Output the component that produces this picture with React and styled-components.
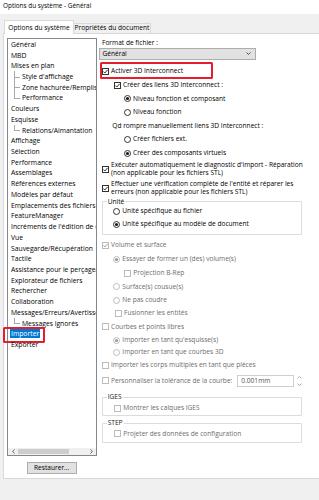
import React from 'react';
import styled, { createGlobalStyle } from 'styled-components';

const Global = createGlobalStyle`
  html, body {
    margin: 0;
    background: #f0f0f0;
    font-family: "Open Sans", "Noto Sans", sans-serif;
    font-size: 6.6px;
    color: #000;
    overflow: hidden;
  }
  #root {
    width: 319px;
    height: 500px;
  }
`;

// tree entries: [label, type]
const tree = [
  ['Général'], ['MBD'], ['Mises en plan'],
  ["Style d'affichage", 'child'], ['Zone hachurée/Remplissage', 'child'], ['Performance', 'last'],
  ['Couleurs'], ['Esquisse'], ['Relations/Aimantation', 'last'],
  ['Affichage'], ['Sélection'], ['Performance'], ['Assemblages'],
  ['Références externes'], ['Modèles par défaut'], ['Emplacements des fichiers'],
  ['FeatureManager'], ["Incréments de l'édition de cotes"], ['Vue'],
  ['Sauvegarde/Récupération'], ['Tactile'], ['Assistance pour le perçage/Toolbox'],
  ['Explorateur de fichiers'], ['Rechercher'], ['Collaboration'],
  ['Messages/Erreurs/Avertissements'], ['Messages ignorés', 'last'],
  ['Importer', 'selected'], ['Exporter'],
];

const Check = ({ on, off }) => (
  <Mark width="7" height="7" viewBox="0 0 7 7">
    <rect x="0.5" y="0.5" width="6" height="6" fill="#fff" stroke={off ? '#bcbcbc' : '#333'} />
    {on && <path d="M1.3 3.5 L2.8 5 L5.7 1.8" fill="none" stroke={off ? '#8f8f8f' : '#1a1a1a'} strokeWidth="0.9" />}
  </Mark>
);

const Radio = ({ on, off }) => (
  <Mark width="7" height="7" viewBox="0 0 7 7">
    <circle cx="3.5" cy="3.5" r="3" fill="#fff" stroke={off ? '#bcbcbc' : '#333'} />
    {on && <circle cx="3.5" cy="3.5" r="1.6" fill={off ? '#9a9a9a' : '#1a1a1a'} />}
  </Mark>
);

const Opt = ({ type, on, off, h, ind, mt, children }) => (
  <Row $h={h} $in={ind} $mt={mt} $off={off}>
    {type === 'check' && <Check on={on} off={off} />}
    {type === 'radio' && <Radio on={on} off={off} />}
    <Text>{children}</Text>
  </Row>
);

const App = () => {
  return (
    <>
      <Global />
      <TitleBar>Options du système - Général</TitleBar>
      <TabStrip>
        <Tab $active>Options du système</Tab>
        <Tab>Propriétés du document</Tab>
      </TabStrip>

      <TabPage>
        <LeftCol>
          <Tree>
            <TreeList>
              {tree.map(([label, type], i) => (
                <TreeRow key={i} $child={type === 'child' || type === 'last'} $last={type === 'last'}>
                  <TreeText $sel={type === 'selected'}>
                    <span>{label}</span>
                  </TreeText>
                  {type === 'selected' && <Annotation />}
                </TreeRow>
              ))}
            </TreeList>
            <HScroll>
              <ScrollBtn>
                <svg width="3" height="5" viewBox="0 0 3 5"><path d="M2.5 0.5 L0.7 2.5 L2.5 4.5" fill="none" stroke="#555" strokeWidth="0.9" /></svg>
              </ScrollBtn>
              <Thumb />
              <ScrollBtn>
                <svg width="3" height="5" viewBox="0 0 3 5"><path d="M0.5 0.5 L2.3 2.5 L0.5 4.5" fill="none" stroke="#555" strokeWidth="0.9" /></svg>
              </ScrollBtn>
            </HScroll>
          </Tree>
          <Button>Restaurer...</Button>
        </LeftCol>

        <RightCol>
          <FieldLabel>Format de fichier :</FieldLabel>
          <Select>
            <span>Général</span>
            <svg width="5" height="3" viewBox="0 0 5 3"><path d="M0.5 0.5 L2.5 2.4 L4.5 0.5" fill="none" stroke="#444" strokeWidth="0.9" /></svg>
          </Select>

          <Highlight>
            <Opt type="check" on h={11}>Activer 3D Interconnect</Opt>
          </Highlight>
          <Opt type="check" on h={13} ind={12}>Créer des liens 3D Interconnect :</Opt>
          <Opt type="radio" on h={13.6} ind={22}>Niveau fonction et composant</Opt>
          <Opt type="radio" h={13.4} ind={22}>Niveau fonction</Opt>
          <Opt h={13.5} ind={10.3}>Qd rompre manuellement liens 3D Interconnect :</Opt>
          <Opt type="radio" h={13.8} ind={22}>Créer fichiers ext.</Opt>
          <Opt type="radio" on h={13.7} ind={22}>Créer des composants virtuels</Opt>
          <Opt type="check" on h={16.8} mt={1}>
            Exécuter automatiquement le diagnostic d'import - Réparation<br />(non applicable pour les fichiers STL)
          </Opt>
          <Opt type="check" on h={16.8} mt={2}>
            Effectuer une vérification complète de l'entité et réparer les<br />erreurs (non applicable pour les fichiers STL)
          </Opt>

          <Group $mt={1} $pb={2.4}>
            <Legend>Unité</Legend>
            <Opt type="radio" h={12} ind={10.3}>Unité spécifique au fichier</Opt>
            <Opt type="radio" on h={14} ind={10.3}>Unité spécifique au modèle de document</Opt>
          </Group>

          <Opt type="check" on off h={13.4} mt={4}>Volume et surface</Opt>
          <Opt type="radio" on off h={14.2} ind={11.3}>Essayer de former un (des) volume(s)</Opt>
          <Opt type="check" off h={13.4} ind={22.3}>Projection B-Rep</Opt>
          <Opt type="radio" off h={13.7} ind={11.3}>Surface(s) cousue(s)</Opt>
          <Opt type="radio" off h={13.2} ind={11.3}>Ne pas coudre</Opt>
          <Opt type="check" off h={13.1} ind={13}>Fusionner les entités</Opt>
          <Opt type="check" off h={14}>Courbes et points libres</Opt>
          <Opt type="radio" on off h={13.5} ind={11.3}>Importer en tant qu'esquisse(s)</Opt>
          <Opt type="radio" off h={10.5} ind={11.3}>Importer en tant que courbes 3D</Opt>
          <Opt type="check" off h={15}>Importer les corps multiples en tant que pièces</Opt>
          <Row $h={15.7} $off>
            <Check off />
            <Text>Personnaliser la tolérance de la courbe:</Text>
            <InputBox>0.001mm</InputBox>
            <Spinner width="7" height="12" viewBox="0 0 7 12">
              <path d="M1.5 3.5 L3.5 1.5 L5.5 3.5" fill="none" stroke="#a0a0a0" strokeWidth="0.9" />
              <path d="M1.5 8.5 L3.5 10.5 L5.5 8.5" fill="none" stroke="#a0a0a0" strokeWidth="0.9" />
            </Spinner>
          </Row>

          <Group $mt={4.6} $pb={0}>
            <Legend $dark>IGES</Legend>
            <Opt type="check" off h={14} ind={11.3}>Montrer les calques IGES</Opt>
          </Group>
          <Group $mt={3} $pb={1.6}>
            <Legend $dark>STEP</Legend>
            <Opt type="check" off h={13.4} ind={11.3}>Projeter des données de configuration</Opt>
          </Group>
        </RightCol>
      </TabPage>
    </>
  );
};

export default App;

const TitleBar = styled.div`
  height: 14px;
  background: #fff;
  padding-left: 3px;
  line-height: 11px;
  font-size: 6.4px;
  box-sizing: border-box;
`;

const TabStrip = styled.div`
  height: 19px;
  display: flex;
  align-items: flex-end;
  padding-left: 4px;
  box-sizing: border-box;
`;

const Tab = styled.div`
  display: flex;
  align-items: center;
  justify-content: center;
  box-sizing: border-box;
  width: ${p => (p.$active ? 70 : 77)}px;
  height: ${p => (p.$active ? 14 : 10.5)}px;
  margin-bottom: ${p => (p.$active ? -1 : 0)}px;
  background: ${p => (p.$active ? '#fff' : '#f0f0f0')};
  border: 1px solid #d9d9d9;
  border-bottom: none;
  border-left: ${p => (p.$active ? '1px solid #d9d9d9' : 'none')};
  position: relative;
  z-index: 1;
  white-space: nowrap;
  line-height: 8px;
`;

const TabPage = styled.div`
  margin-left: 3px;
  height: 446px;
  box-sizing: border-box;
  background: #fff;
  border-top: 1px solid #d9d9d9;
  border-left: 1px solid #d9d9d9;
  border-bottom: 1px solid #d9d9d9;
  display: flex;
`;

const LeftCol = styled.div`
  display: flex;
  flex-direction: column;
  padding: 4px 0 0 3px;
  flex-shrink: 0;
`;

const Tree = styled.div`
  width: 90px;
  height: 418px;
  box-sizing: border-box;
  border: 1px solid #828790;
  display: flex;
  flex-direction: column;
  background: #fff;
`;

const TreeList = styled.div`
  flex: 1;
`;

const TreeRow = styled.div`
  position: relative;
  height: 10.72px;
  display: flex;
  align-items: center;
  padding-left: ${p => (p.$child ? 13 : 2)}px;
  font-size: 6.8px;

  &::before {
    content: '';
    display: ${p => (p.$child ? 'block' : 'none')};
    position: absolute;
    left: 6px;
    top: 0;
    width: 1px;
    height: ${p => (p.$last ? '50%' : '100%')};
    background: #a8a8a8;
  }
  &::after {
    content: '';
    display: ${p => (p.$child ? 'block' : 'none')};
    position: absolute;
    left: 6px;
    top: 50%;
    width: 6px;
    height: 1px;
    background: #a8a8a8;
  }
`;

const TreeText = styled.div`
  flex: 1;
  min-width: 0;
  overflow: hidden;
  white-space: nowrap;

  span {
    padding: 0 1px;
    line-height: 9px;
    display: inline-block;
    background: ${p => (p.$sel ? '#0078d7' : 'transparent')};
    color: ${p => (p.$sel ? '#fff' : '#000')};
  }
`;

const Annotation = styled.div`
  position: absolute;
  left: -5.3px;
  top: -1.6px;
  width: 42.3px;
  height: 15.7px;
  box-sizing: border-box;
  border: 2px solid #e41f2b;
  border-radius: 1.5px;
`;

const HScroll = styled.div`
  height: 7px;
  display: flex;
  align-items: center;
  background: #f0f0f0;
`;

const ScrollBtn = styled.div`
  width: 10px;
  height: 7px;
  display: flex;
  align-items: center;
  justify-content: center;
`;

const Thumb = styled.div`
  width: 51px;
  height: 5px;
  background: #cdcdcd;
  margin-right: auto;
`;

const Button = styled.div`
  margin-top: 5.7px;
  margin-left: 19.7px;
  width: 50px;
  height: 12.6px;
  box-sizing: border-box;
  border: 1px solid #adadad;
  background: #e1e1e1;
  display: flex;
  align-items: center;
  justify-content: center;
`;

const RightCol = styled.div`
  margin-left: 5px;
  padding-top: 4px;
  width: 202px;
  flex-shrink: 0;
  display: flex;
  flex-direction: column;
`;

const FieldLabel = styled.div`
  height: 10px;
  line-height: 10px;
  white-space: nowrap;
`;

const Select = styled.div`
  margin-left: -3px;
  width: 157px;
  height: 11.5px;
  box-sizing: border-box;
  border: 1px solid #adadad;
  background: #e1e1e1;
  display: flex;
  align-items: center;
  justify-content: space-between;
  padding: 0 4px 0 2.5px;
`;

const Highlight = styled.div`
  margin-top: 2.5px;
  margin-left: -2px;
  width: 113px;
  height: 17px;
  box-sizing: border-box;
  border: 2px solid #e41f2b;
  border-radius: 1.5px;
  padding-top: 2px;
`;

const Row = styled.div`
  display: flex;
  align-items: center;
  gap: 2px;
  height: ${p => p.$h}px;
  padding-left: ${p => p.$in || 0}px;
  margin-top: ${p => p.$mt || 0}px;
  color: ${p => (p.$off ? '#6d6d6d' : '#000')};
  white-space: nowrap;
`;

const Text = styled.span`
  line-height: 8.4px;
`;

const Mark = styled.svg`
  display: block;
  flex-shrink: 0;
`;

const Group = styled.fieldset`
  margin: ${p => p.$mt}px 0 0 0;
  padding: 0 0 ${p => p.$pb}px 0;
  width: 200px;
  min-width: 0;
  box-sizing: border-box;
  border: 1px solid #dcdcdc;
  border-radius: 1px;
`;

const Legend = styled.legend`
  padding: 0 1px;
  margin-left: 3.7px;
  line-height: 8px;
  color: ${p => (p.$dark ? '#222' : '#000')};
`;

const InputBox = styled.div`
  margin-left: auto;
  width: 56.6px;
  height: 11.7px;
  box-sizing: border-box;
  border: 1px solid #cfcfcf;
  background: #fff;
  display: flex;
  align-items: center;
  padding-left: 3px;
  color: #555;
`;

const Spinner = styled.svg`
  display: block;
  flex-shrink: 0;
  margin-left: 0.4px;
  margin-right: 0.7px;
`;
